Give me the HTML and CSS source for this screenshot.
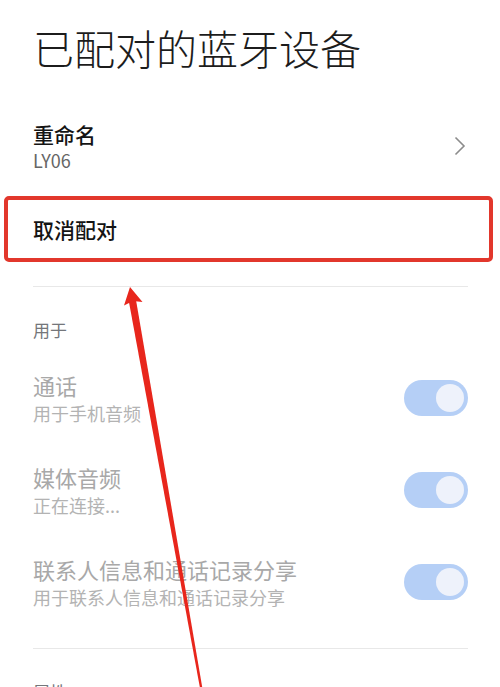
FILE: index.html
```html
<!DOCTYPE html>
<html lang="zh-CN">
<head>
    <meta charset="UTF-8">
    <title>已配对的蓝牙设备</title>
    <link rel="stylesheet" href="styles.css">
</head>
<body>
<div class="page">
    <h1 class="title">已配对的蓝牙设备</h1>

    <div class="row rename">
        <div class="row-text">
            <div class="row-title">重命名</div>
            <div class="row-sub dark">LY06</div>
        </div>
        <svg class="chevron" width="12" height="20" viewBox="0 0 12 20">
            <polyline points="1.5,1.5 10,10 1.5,18.5" fill="none" stroke="#8c8c8c" stroke-width="1.6"/>
        </svg>
    </div>

    <div class="row unpair">
        <div class="row-title">取消配对</div>
    </div>

    <div class="divider"></div>

    <div class="section-head">用于</div>

    <div class="row item">
        <div class="row-text">
            <div class="row-title muted">通话</div>
            <div class="row-sub">用于手机音频</div>
        </div>
        <div class="switch on"><span class="knob"></span></div>
    </div>

    <div class="row item">
        <div class="row-text">
            <div class="row-title muted">媒体音频</div>
            <div class="row-sub">正在连接...</div>
        </div>
        <div class="switch on"><span class="knob"></span></div>
    </div>

    <div class="row item">
        <div class="row-text">
            <div class="row-title muted">联系人信息和通话记录分享</div>
            <div class="row-sub">用于联系人信息和通话记录分享</div>
        </div>
        <div class="switch on"><span class="knob"></span></div>
    </div>

    <div class="divider second"></div>

    <div class="section-head">属性</div>
</div>

<!-- red marker around the unpair row, plus the pointer arrow -->
<div class="mark-box"></div>
<svg class="mark-arrow" width="500" height="687" viewBox="0 0 500 687">
    <polygon points="128.6,300 136,300 202.2,687 199.8,687" fill="#e8261c"/>
    <polygon points="130,287 142.5,302 133,301 124,305.5" fill="#e8261c"/>
</svg>
</body>
</html>
```

FILE: styles.css
```css
body {
    margin: 0;
    background: #ffffff;
    font-family: "Noto Sans CJK SC", "Noto Sans", sans-serif;
    position: relative;
    height: 687px;
    overflow: hidden;
}

.page {
    padding: 27px 32px 0 33px;
}

.title {
    margin: 0;
    font-size: 41px;
    line-height: 41px;
    font-weight: 300;
    color: #1c1c1c;
}

.row {
    display: flex;
    align-items: center;
    justify-content: space-between;
}

.row-title {
    font-size: 21px;
    line-height: 28px;
    font-weight: 500;
    color: #141414;
}

.row-sub {
    font-size: 18px;
    line-height: 24px;
    color: #b3b3b3;
}

.row-sub.dark {
    color: #666666;
}

.rename {
    margin-top: 52px;
}

.chevron {
    margin-right: 2px;
}

.unpair {
    margin-top: 24px;
    height: 66px;
}

.divider {
    height: 1px;
    background: #e8e8e8;
    margin-top: 24px;
}

.divider.second {
    margin-top: 20px;
}

.section-head {
    margin-top: 31px;
    font-size: 17px;
    line-height: 24px;
    color: #74767a;
}

.item {
    padding: 19px 0;
}

.item .row-sub {
    margin-top: 2px;
}

.section-head + .item {
    margin-top: 10px;
}

.row-title.muted {
    font-size: 22px;
    font-weight: 400;
    color: #a8a8a8;
}

.switch {
    width: 64px;
    height: 36px;
    border-radius: 18px;
    background: #b5cff6;
    display: flex;
    align-items: center;
    justify-content: flex-end;
    padding: 0 4px;
    box-sizing: border-box;
    flex-shrink: 0;
}

.knob {
    width: 28px;
    height: 28px;
    border-radius: 50%;
    background: #eef2fb;
}

.mark-box {
    position: absolute;
    left: 4px;
    top: 196px;
    width: 489px;
    height: 66px;
    box-sizing: border-box;
    border: 4px solid #e2372c;
    border-radius: 5px;
}

.mark-arrow {
    position: absolute;
    left: 0;
    top: 0;
    pointer-events: none;
}
```
